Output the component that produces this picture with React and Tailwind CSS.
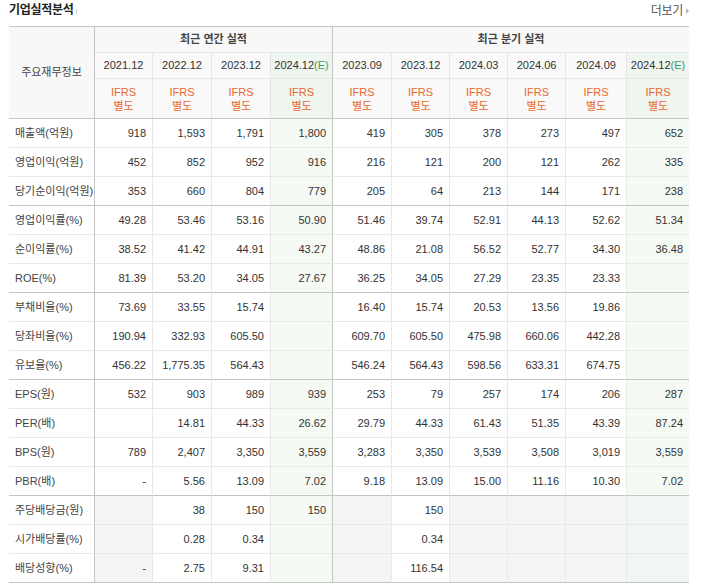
import React from 'react';

const annualYears = ['2021.12', '2022.12', '2023.12', '2024.12'];
const quarterYears = ['2023.09', '2023.12', '2024.03', '2024.06', '2024.09', '2024.12'];

// G = empty gray cell
const G = null;

const rows = [
  ['매출액(억원)', ['918', '1,593', '1,791', '1,800'], ['419', '305', '378', '273', '497', '652']],
  ['영업이익(억원)', ['452', '852', '952', '916'], ['216', '121', '200', '121', '262', '335']],
  ['당기순이익(억원)', ['353', '660', '804', '779'], ['205', '64', '213', '144', '171', '238']],
  ['영업이익률(%)', ['49.28', '53.46', '53.16', '50.90'], ['51.46', '39.74', '52.91', '44.13', '52.62', '51.34']],
  ['순이익률(%)', ['38.52', '41.42', '44.91', '43.27'], ['48.86', '21.08', '56.52', '52.77', '34.30', '36.48']],
  ['ROE(%)', ['81.39', '53.20', '34.05', '27.67'], ['36.25', '34.05', '27.29', '23.35', '23.33', '']],
  ['부채비율(%)', ['73.69', '33.55', '15.74', ''], ['16.40', '15.74', '20.53', '13.56', '19.86', '']],
  ['당좌비율(%)', ['190.94', '332.93', '605.50', ''], ['609.70', '605.50', '475.98', '660.06', '442.28', '']],
  ['유보율(%)', ['456.22', '1,775.35', '564.43', ''], ['546.24', '564.43', '598.56', '633.31', '674.75', '']],
  ['EPS(원)', ['532', '903', '989', '939'], ['253', '79', '257', '174', '206', '287']],
  ['PER(배)', ['', '14.81', '44.33', '26.62'], ['29.79', '44.33', '61.43', '51.35', '43.39', '87.24']],
  ['BPS(원)', ['789', '2,407', '3,350', '3,559'], ['3,283', '3,350', '3,539', '3,508', '3,019', '3,559']],
  ['PBR(배)', ['-', '5.56', '13.09', '7.02'], ['9.18', '13.09', '15.00', '11.16', '10.30', '7.02']],
  ['주당배당금(원)', [G, '38', '150', '150'], [G, '150', G, G, G, G]],
  ['시가배당률(%)', [G, '0.28', '0.34', ''], [G, '0.34', G, G, G, G]],
  ['배당성향(%)', ['-g', '2.75', '9.31', ''], [G, '116.54', G, G, G, G]],
];

const groupEnds = [2, 5, 8, 12, 15];

const colWidths = ['w-[58px]', 'w-[59px]', 'w-[59px]', 'w-[62px]', 'w-[59px]', 'w-[58px]', 'w-[58px]', 'w-[58px]', 'w-[61px]', 'w-[62px]'];

function Year({ y, est }) {
  return (
    <span>
      {y}
      {est && <span className="text-[#3f9a5c]">(E)</span>}
    </span>
  );
}

export default function App() {
  return (
    <div className="w-[705px] h-[587px] bg-white pl-[9px] text-[11px] text-[#333]" style={{ fontFamily: '"Liberation Sans", "Noto Sans CJK KR", sans-serif' }}>
      {/* Title */}
      <div className="flex justify-between h-[26px] w-[680px]">
        <div className="flex items-center self-start pt-[2px] h-[18px]">
          <h2 className="text-[12px] font-bold text-[#222] tracking-[-0.3px]">기업실적분석</h2>
          <span className="ml-[3px] mt-[2px] w-px h-[5px] bg-[#d0d0d0]" />
        </div>
        <a className="self-end mb-[6px] flex items-center text-[12px] text-[#555] tracking-[-0.3px]">
          더보기
          <span className="ml-[3px] w-0 h-0 border-y-[3px] border-y-transparent border-l-[3px] border-l-[#b5b5b5]" />
        </a>
      </div>

      <table className="w-[680px] table-fixed border-separate border-spacing-0 border-t border-t-[#c5c5c5]">
        <colgroup>
          <col className="w-[86px]" />
          {colWidths.map((w, i) => (
            <col key={i} className={w} />
          ))}
        </colgroup>
        <thead>
          <tr className="h-[26px]">
            <th rowSpan={3} className="bg-[#f8f8f8] font-normal text-[#444] border-r border-r-[#c5c5c5] border-b border-b-[#c5c5c5] text-center">
              주요재무정보
            </th>
            <th colSpan={4} className="bg-[#f8f8f8] font-bold text-[#444] border-r border-r-[#c5c5c5] border-b border-b-[#e6e6e6] text-center">
              최근 연간 실적
            </th>
            <th colSpan={6} className="bg-[#f8f8f8] font-bold text-[#444] border-b border-b-[#e6e6e6] text-center">
              최근 분기 실적
            </th>
          </tr>
          <tr className="h-[26px]">
            {annualYears.map((y, i) => (
              <th
                key={y}
                className={`font-normal text-[#333] text-center border-b border-b-[#e6e6e6] border-r ${
                  i === 3 ? 'bg-[#eff5ef] border-r-[#c5c5c5]' : 'bg-[#f9f9f9] border-r-[#e6e6e6]'
                }`}
              >
                <Year y={y} est={i === 3} />
              </th>
            ))}
            {quarterYears.map((y, i) => (
              <th
                key={y + i}
                className={`font-normal text-[#333] text-center border-b border-b-[#e6e6e6] ${
                  i === 5 ? 'bg-[#eff5ef]' : 'bg-[#f9f9f9] border-r border-r-[#e6e6e6]'
                }`}
              >
                <Year y={y} est={i === 5} />
              </th>
            ))}
          </tr>
          <tr className="h-[40px]">
            {[...annualYears, ...quarterYears].map((y, i) => (
              <th
                key={'ifrs' + i}
                className={`font-normal text-center leading-[14px] text-[#e8682c] border-b border-b-[#c5c5c5] ${
                  i === 3 || i === 9 ? 'bg-[#eff5ef]' : 'bg-[#f9f9f9]'
                } ${i === 3 ? 'border-r border-r-[#c5c5c5]' : i === 9 ? '' : 'border-r border-r-[#e6e6e6]'}`}
              >
                IFRS
                <br />
                별도
              </th>
            ))}
          </tr>
        </thead>
        <tbody>
          {rows.map(([label, annual, quarter], r) => {
            const bottom = groupEnds.includes(r) ? 'border-b-[#c5c5c5]' : 'border-b-[#e9e9e9]';
            const cells = [...annual, ...quarter];
            return (
              <tr key={label} className="h-[29px]">
                <td className={`pl-[6px] text-[#444] whitespace-nowrap border-b border-r border-r-[#c5c5c5] ${bottom}`}>{label}</td>
                {cells.map((v, i) => {
                  const est = i === 3 || i === 9;
                  const empty = v === null || v === '-g';
                  let bg = 'bg-white';
                  if (empty) bg = est ? 'bg-[#f2f6f2]' : 'bg-[#f5f5f5]';
                  else if (est) bg = 'bg-[#f5faf5]';
                  const right = i === 3 ? 'border-r border-r-[#c5c5c5]' : i === 9 ? '' : 'border-r border-r-[#e9e9e9]';
                  return (
                    <td key={i} className={`text-right pr-[6px] text-[#333] whitespace-nowrap border-b ${bottom} ${right} ${bg}`}>
                      {v === '-g' ? '-' : v}
                    </td>
                  );
                })}
              </tr>
            );
          })}
        </tbody>
      </table>
    </div>
  );
}
